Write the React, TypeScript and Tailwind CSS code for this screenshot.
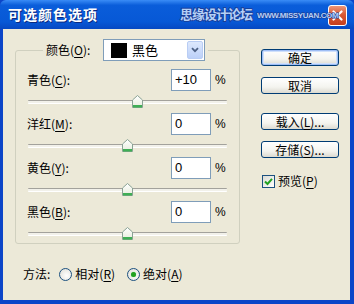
import React from 'react'

const font = { fontFamily: '"Noto Sans CJK SC", "Liberation Sans", sans-serif' }

function U({ children }: { children: React.ReactNode }) {
  return <span className="underline underline-offset-2">{children}</span>
}

function Thumb() {
  return (
    <svg width="11" height="13" viewBox="0 0 11 13">
      <defs>
        <linearGradient id="tg" x1="0" y1="0" x2="0" y2="1">
          <stop offset="0" stopColor="#ffffff" />
          <stop offset="1" stopColor="#e6ecdc" />
        </linearGradient>
      </defs>
      <path d="M0.5 5 L5.5 0.5 L10.5 5 L10.5 12.5 L0.5 12.5 Z" fill="url(#tg)" stroke="#8aa295" />
      <rect x="1" y="10" width="9" height="2.5" fill="#3fae55" />
    </svg>
  )
}

function Slider({ value }: { value: number }) {
  const pos = ((value + 100) / 200) * 199
  return (
    <div className="h-[22px] flex items-center">
      <div className="relative w-[199px] ml-[1px] h-[4px] border-t border-[#a3a29c] border-b border-b-white bg-[#f2f1ea] rounded-[1px]">
        <div className="absolute top-[-6px]" style={{ left: pos - 5.5 }}>
          <Thumb />
        </div>
      </div>
    </div>
  )
}

function Row({ label, k, value }: { label: string; k: string; value: string }) {
  return (
    <div>
      <div className="h-[22px] flex items-center">
        <span className="flex-1 text-[12px] text-black">
          {label}(<U>{k}</U>):
        </span>
        <div className="w-[40px] h-[22px] border border-[#7f9db9] bg-white flex items-center pl-[3px] text-[13px] text-black" style={{ fontFamily: '"Liberation Sans", sans-serif' }}>
          {value}
        </div>
        <span className="w-[13px] ml-[4px] text-[12px] text-black" style={{ fontFamily: '"Liberation Sans", sans-serif' }}>%</span>
      </div>
      <Slider value={parseInt(value, 10)} />
    </div>
  )
}

function Btn({ children, def }: { children: React.ReactNode; def?: boolean }) {
  return (
    <div
      className={
        'w-[78px] h-[17px] rounded-[3px] border border-[#003c74] flex items-center justify-center text-[12px] text-black bg-[linear-gradient(#ffffff,#f4f4ef_60%,#dcdad0)] ' +
        (def ? 'shadow-[inset_0_0_0_1px_#9fbef5,inset_0_0_0_2px_#cfe0fb]' : '')
      }
    >
      {children}
    </div>
  )
}

function Radio({ on }: { on?: boolean }) {
  return (
    <div className="w-[13px] h-[13px] rounded-full border border-[#1c5180] bg-[radial-gradient(circle_at_60%_60%,#ffffff,#dcdcd4)] flex items-center justify-center">
      {on && <div className="w-[5px] h-[5px] rounded-full bg-[#21a121] shadow-[0_0_1px_#6fd36f]" />}
    </div>
  )
}

export default function App() {
  return (
    <div className="w-[354px] h-[304px] flex flex-col bg-[#0b45c8] overflow-hidden" style={font}>
      {/* title bar */}
      <div className="relative h-[29px] shrink-0 flex items-center pl-[8px] bg-[linear-gradient(#3a8cf6,#0a5dda_18%,#0758d6_75%,#0648c2)] rounded-t-[6px]">
        <span className="text-[14px] font-bold text-white tracking-[1px] [text-shadow:1px_1px_0_#0a2a80]">可选颜色选项</span>
        <div className="absolute left-[328px] top-[5px] w-[19px] h-[21px] rounded-[3px] border border-white bg-[linear-gradient(#ec9576,#d85a36_45%,#c63d1c)] flex items-center justify-center">
          <svg width="11" height="11" viewBox="0 0 11 11">
            <path d="M1.5 1.5 L9.5 9.5 M9.5 1.5 L1.5 9.5" stroke="#ffffff" strokeWidth="2.2" strokeLinecap="round" />
          </svg>
        </div>
        <div className="absolute z-10 left-[180px] top-[6px] flex items-end gap-[5px] whitespace-nowrap">
          <span className="text-[13px] leading-[16px] font-bold text-[#b4d0f7] tracking-[-1px] [-webkit-text-stroke:1.6px_#1c3c94] [paint-order:stroke_fill]">思缘设计论坛</span>
          <span className="text-[8px] leading-[12px] font-bold text-[#b4d0f7] tracking-[-0.4px] [-webkit-text-stroke:1.2px_#1c3c94] [paint-order:stroke_fill]" style={{ fontFamily: '"Liberation Sans", sans-serif' }}>
            WWW.MISSYUAN.COM
          </span>
        </div>
      </div>

      {/* body */}
      <div className="flex-1 flex ml-[3px] mr-[4px] mb-[4px] bg-[#ece9d8]">
        <div className="pl-[12px] pt-[10px]">
          <fieldset className="w-[225px] h-[205px] border border-[#d0d0bf] rounded-[3px] pl-[11px] pr-[11px] pt-[8px]">
            <legend className="ml-[16px] px-[3px] flex items-center">
              <span className="text-[12px] text-black w-[57px]">
                颜色(<U>O</U>):
              </span>
              <div className="w-[102px] h-[22px] border border-[#7f9db9] bg-white flex items-center pl-[7px] pr-[1px]">
                <div className="w-[16px] h-[15px] bg-black" />
                <span className="ml-[5px] text-[13px] text-black flex-1">黑色</span>
                <div className="w-[16px] h-[18px] rounded-[2px] border border-[#b9cdf4] bg-[linear-gradient(#dde8fd,#bcd0f8)] flex items-center justify-center">
                  <svg width="8" height="6" viewBox="0 0 8 6">
                    <path d="M1 1.2 L4 4.2 L7 1.2" fill="none" stroke="#4d6185" strokeWidth="1.8" />
                  </svg>
                </div>
              </div>
            </legend>
            <Row label="青色" k="C" value="+10" />
            <Row label="洋红" k="M" value="0" />
            <Row label="黄色" k="Y" value="0" />
            <Row label="黑色" k="B" value="0" />
          </fieldset>
          <div className="mt-[21px] ml-[8px] flex items-center text-[12px] text-black">
            <span className="mr-[9px]">方法:</span>
            <Radio />
            <span className="ml-[3px] mr-[12px]">
              相对(<U>R</U>)
            </span>
            <Radio on />
            <span className="ml-[3px]">
              绝对(<U>A</U>)
            </span>
          </div>
        </div>

        <div className="ml-[21px] pt-[20px] flex flex-col">
          <Btn def>确定</Btn>
          <div className="mt-[11px]">
            <Btn>取消</Btn>
          </div>
          <div className="mt-[19px]">
            <Btn>
              载入(<U>L</U>)...
            </Btn>
          </div>
          <div className="mt-[11px]">
            <Btn>
              存储(<U>S</U>)...
            </Btn>
          </div>
          <div className="mt-[14px] flex items-center gap-[3px] ml-[1px]">
            <div className="w-[13px] h-[13px] border border-[#1c5180] bg-[linear-gradient(135deg,#dcdcd4,#ffffff)] flex items-center justify-center">
              <svg width="9" height="9" viewBox="0 0 9 9">
                <path d="M1 4.5 L3.5 7 L8 1.8" fill="none" stroke="#21a121" strokeWidth="2" />
              </svg>
            </div>
            <span className="text-[12px] text-black">
              预览(<U>P</U>)
            </span>
          </div>
        </div>
      </div>
    </div>
  )
}
